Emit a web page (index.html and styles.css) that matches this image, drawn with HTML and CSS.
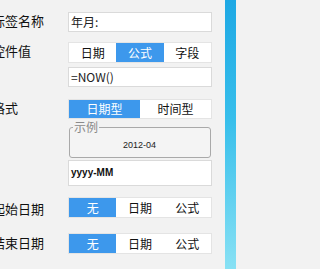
FILE: index.html
```html
<!DOCTYPE html>
<html lang="zh">
<head>
<meta charset="utf-8">
<link rel="stylesheet" href="styles.css">
</head>
<body>
<div class="page">
  <main class="form">
    <div class="row r-name">
      <span class="label">标签名称</span>
      <div class="ctl"><div class="input">年月:</div></div>
    </div>
    <div class="row r-value">
      <span class="label">控件值</span>
      <div class="ctl">
        <div class="seg"><span>日期</span><span class="on">公式</span><span>字段</span></div>
        <div class="input input-gap">=NOW()</div>
      </div>
    </div>
    <div class="row r-fmt">
      <span class="label">格式</span>
      <div class="ctl">
        <div class="seg seg-short"><span class="on">日期型</span><span>时间型</span></div>
        <fieldset class="sample">
          <legend>示例</legend>
          <div class="sample-val">2012-04</div>
        </fieldset>
        <div class="input input-tall">yyyy-MM</div>
      </div>
    </div>
    <div class="row r-start">
      <span class="label">起始日期</span>
      <div class="ctl">
        <div class="seg"><span class="on">无</span><span>日期</span><span>公式</span></div>
      </div>
    </div>
    <div class="row r-end">
      <span class="label">结束日期</span>
      <div class="ctl">
        <div class="seg"><span class="on">无</span><span>日期</span><span>公式</span></div>
      </div>
    </div>
  </main>
  <div class="strip"></div>
</div>
</body>
</html>
```
FILE: styles.css
```css
html, body {
  margin: 0;
  padding: 0;
}
body {
  background: #f2f2f2;
  font-family: "Noto Sans CJK SC", "Noto Sans", sans-serif;
  overflow: hidden;
}
.page {
  display: flex;
  width: 236px;
  height: 269px;
  overflow: hidden;
}
.form {
  width: 225px;
  flex: none;
  padding-top: 12px;
  box-sizing: border-box;
  overflow: hidden;
}
.row {
  display: flex;
  align-items: flex-start;
}
.label {
  width: 76px;
  flex: none;
  margin-left: -8px;
  font-size: 13px;
  line-height: 17px;
  color: #111;
  white-space: nowrap;
}
.ctl {
  width: 144px;
  flex: none;
  display: flex;
  flex-direction: column;
}
.input {
  height: 20px;
  box-sizing: border-box;
  border: 1px solid #dadada;
  background: #fff;
  font-size: 12px;
  line-height: 18px;
  padding-left: 2px;
  color: #222;
}
.input-gap {
  margin-top: 4px;
}
.input-tall {
  height: 26px;
  margin-top: 2px;
  line-height: 24px;
  font-family: "Liberation Sans", Arial, sans-serif;
  font-size: 10px;
  font-weight: bold;
  color: #111;
}
.seg {
  display: flex;
  height: 21px;
  box-sizing: border-box;
  background: #fff;
  border: 1px solid #e4e4e4;
}
.seg span {
  flex: 1;
  text-align: center;
  font-size: 12px;
  line-height: 19px;
  color: #111;
}
.seg .on {
  background: #3d98ec;
  color: #fff;
}
.seg-short {
  height: 20px;
}
.seg-short span {
  line-height: 18px;
}
.sample {
  margin: 1px 1px 0;
  padding: 0 4px 0 3px;
  border: 1px solid #a9a9a9;
  border-radius: 3px;
  min-width: 0;
  background: #f4f4f4;
}
.sample legend {
  padding: 0 1px;
  font-size: 12px;
  line-height: 14px;
  color: #8a8a8a;
}
.sample-val {
  height: 23px;
  line-height: 23px;
  text-align: center;
  font-family: "Liberation Sans", Arial, sans-serif;
  font-size: 9px;
  color: #222;
}
.r-value {
  margin-top: 10px;
}
.r-fmt {
  margin-top: 12px;
}
.r-start {
  margin-top: 11px;
}
.r-start .label {
  padding-top: 3px;
}
.r-end {
  margin-top: 15px;
}
.r-end .label {
  padding-top: 1px;
}
.strip {
  flex: 1;
  height: 269px;
  background: linear-gradient(to bottom, #1ea8e4 0%, #38bfeb 45%, #88e1f4 100%);
}
```
